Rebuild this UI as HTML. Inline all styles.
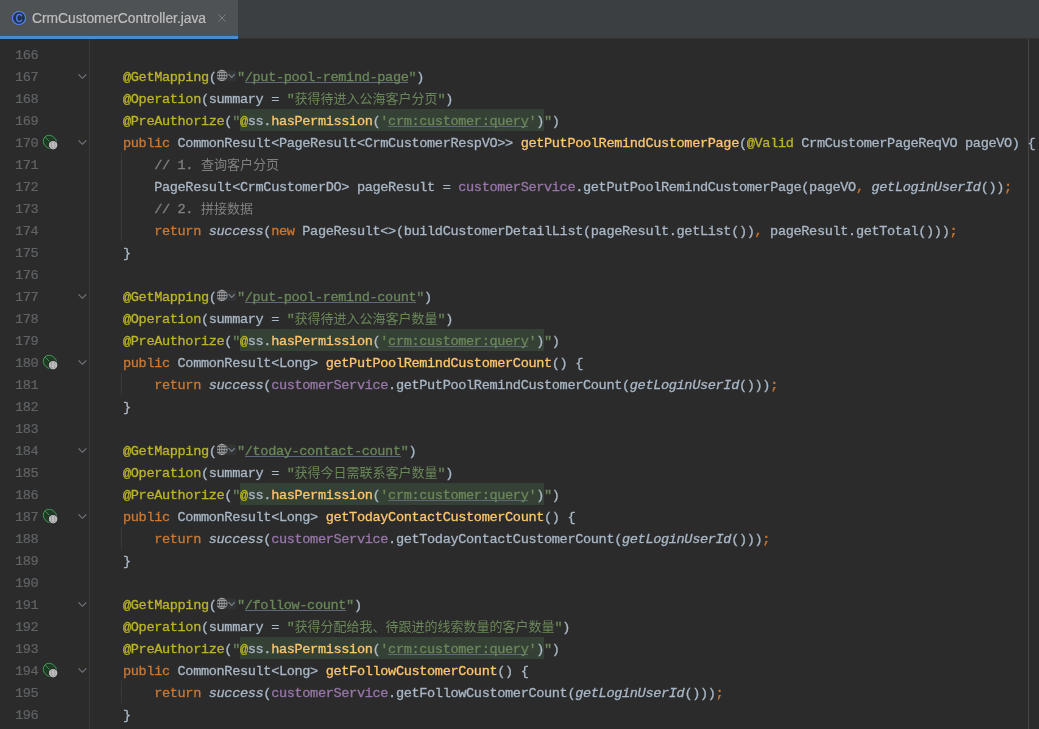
<!DOCTYPE html>
<html lang="zh"><head><meta charset="utf-8"><title>CrmCustomerController.java</title>
<style>
html,body{margin:0;padding:0;background:#2b2b2b;}
#ide{position:absolute;left:0;top:0;width:1039px;height:729px;will-change:transform;}
body{width:1039px;height:729px;overflow:hidden;position:relative;font-family:"Liberation Mono","Noto Sans CJK SC",monospace;font-size:13px;color:#a9b7c6;}
.tabbar{position:absolute;left:0;top:0;width:1039px;height:38px;background:#3c3f41;border-bottom:1px solid #323232;}
.tab{position:absolute;left:0;top:0;width:238px;height:36px;background:#4e5254;border-bottom:3px solid #4a8ad0;}
.cicon{position:absolute;left:11px;top:10px;overflow:visible;}
.tabname{position:absolute;left:32px;top:0;line-height:38.6px;font-family:"Liberation Sans",sans-serif;font-size:13.8px;letter-spacing:0;color:#bfbfbf;-webkit-text-stroke:0.2px;white-space:pre;}
.close{position:absolute;left:218px;top:14px;}
.gline{position:absolute;left:89px;top:39px;width:1px;height:690px;background:#373839;}
.margin{position:absolute;left:1028px;top:39px;width:1px;height:690px;background:#44464a;}
.guide{position:absolute;left:121px;width:1px;background:#393939;}
.ln{position:absolute;left:15px;height:22px;line-height:26px;font-size:13.6px;letter-spacing:-0.361px;-webkit-text-stroke:0.2px;color:#606366;white-space:pre;}
.cl{position:absolute;left:123px;height:22px;line-height:22px;white-space:pre;font-size:13.6px;letter-spacing:-0.361px;-webkit-text-stroke:0.3px;}
.cl span{display:inline-block;height:22px;line-height:22px;vertical-align:top;position:relative;top:2px;}
.cl span.inj,.cl span.inlay{top:0;}
.cl span.z{top:-2px;}
.fold{position:absolute;left:78px;}
.gi{position:absolute;left:42px;}
.z{font-family:"Noto Sans CJK SC",sans-serif;font-size:13px;letter-spacing:0;-webkit-text-stroke:0;}
.an{color:#bbb529;}
.k{color:#cc7832;}
.s{color:#6a8759;}
.su{color:#6a8759;background:linear-gradient(#5e687a,#5e687a) 0 15px/100% 1px no-repeat;}
.m{color:#ffc66d;}
.f{color:#9876aa;}
.c{color:#808080;}
.i{font-style:italic;}
.inj{background:#364135;}
.inlay{width:20.4px;overflow:visible;}
.inlay svg{display:block;}
</style></head>
<body>
<div id="ide">
<div class="tabbar"><div class="tab"><svg class="cicon" width="16" height="16" viewBox="0 0 16 16"><circle cx="8" cy="8" r="6.55" fill="#25324d" stroke="#548af7" stroke-width="1.1"/><text transform="translate(8.05 12) scale(0.84 1)" text-anchor="middle" font-family="Liberation Sans, sans-serif" font-size="11" fill="#548af7" stroke="#548af7" stroke-width="0.3">C</text></svg><span class="tabname">CrmCustomerController.java</span><svg class="close" width="8" height="8" viewBox="0 0 8 8"><path d="M0.5 0.5L7.5 7.5M7.5 0.5L0.5 7.5" stroke="#787e83" stroke-width="1" fill="none"/></svg></div></div>
<div class="gline"></div><div class="margin"></div>
<div class="guide" style="top:153px;height:88px"></div>
<div class="guide" style="top:373px;height:22px"></div>
<div class="guide" style="top:527px;height:22px"></div>
<div class="guide" style="top:681px;height:22px"></div>
<div class="ln" style="top:43px">166</div>
<div class="ln" style="top:65px">167</div>
<svg class="fold" style="top:74px" width="10" height="6" viewBox="0 0 10 6"><path d="M0.5 0.4L4.4 4.3L8.3 0.4" fill="none" stroke="#747a80" stroke-width="1.1"/></svg>
<div class="cl" style="top:65px"><span class="an">@GetMapping</span><span class="d">(</span><span class="inlay"><svg width="21" height="22" viewBox="0 0 21 22"><rect x="-0.5" y="5.2" width="19.8" height="10.8" rx="2.5" fill="#323334"/><g fill="none" stroke="#b0b2b4" stroke-width="0.75"><circle cx="4.9" cy="10.45" r="5.2"/><ellipse cx="4.9" cy="10.45" rx="2.4" ry="5.2"/><path d="M-0.3 10.45H10.1M4.9 5.25V15.65M0.7 7.6H9.1M0.7 13.3H9.1"/></g><path d="M11.6 9.2l3.1 3.1l3.1-3.1" fill="none" stroke="#75818c" stroke-width="1.2"/></svg></span><span class="s">"</span><span class="su">/put-pool-remind-page</span><span class="s">"</span><span class="d">)</span></div>
<div class="ln" style="top:87px">168</div>
<div class="cl" style="top:87px"><span class="an">@Operation</span><span class="d">(summary = </span><span class="s">"<span class="z">获得待进入公海客户分页</span>"</span><span class="d">)</span></div>
<div class="ln" style="top:109px">169</div>
<div class="cl" style="top:109px"><span class="an">@PreAuthorize</span><span class="d">(</span><span class="s">"</span><span class="inj"><span class="an">@</span><span class="d">ss.</span><span class="m">hasPermission</span><span class="d">(</span><span class="s">'</span><span class="su">crm:customer:query</span><span class="s">'</span><span class="d">)</span></span><span class="s">"</span><span class="d">)</span></div>
<div class="ln" style="top:131px">170</div>
<svg class="fold" style="top:140px" width="10" height="6" viewBox="0 0 10 6"><path d="M0.5 0.4L4.4 4.3L8.3 0.4" fill="none" stroke="#747a80" stroke-width="1.1"/></svg>
<svg class="gi" style="top:133px" width="18" height="18" viewBox="0 0 18 18"><ellipse cx="8" cy="9" rx="7.2" ry="6.2" transform="rotate(45 8 9)" fill="#1f3a25" stroke="#45a05a" stroke-width="0.85"/><path d="M3.2 4.2L7.8 8.8" stroke="#45a05a" stroke-width="0.85" fill="none"/><circle cx="11.1" cy="12.1" r="5.1" fill="#2b2b2b"/><circle cx="11.1" cy="12.1" r="4.2" fill="#d6d6d6"/><g fill="none" stroke="#8e8e8e" stroke-width="0.7"><ellipse cx="11.1" cy="12.1" rx="1.8" ry="4"/><path d="M7 12.1H15.2M7.8 10H14.4M7.8 14.2H14.4"/></g></svg>
<div class="cl" style="top:131px"><span class="k">public</span><span class="d"> CommonResult&lt;PageResult&lt;CrmCustomerRespVO&gt;&gt; </span><span class="m">getPutPoolRemindCustomerPage</span><span class="d">(</span><span class="an">@Valid</span><span class="d"> CrmCustomerPageReqVO pageVO) {</span></div>
<div class="ln" style="top:153px">171</div>
<div class="cl" style="top:153px"><span class="d">    </span><span class="c">// 1. <span class="z">查询客户分页</span></span></div>
<div class="ln" style="top:175px">172</div>
<div class="cl" style="top:175px"><span class="d">    PageResult&lt;CrmCustomerDO&gt; pageResult = </span><span class="f">customerService</span><span class="d">.getPutPoolRemindCustomerPage(pageVO</span><span class="k">,</span><span class="d"> </span><span class="i">getLoginUserId</span><span class="d">())</span><span class="k">;</span></div>
<div class="ln" style="top:197px">173</div>
<div class="cl" style="top:197px"><span class="d">    </span><span class="c">// 2. <span class="z">拼接数据</span></span></div>
<div class="ln" style="top:219px">174</div>
<div class="cl" style="top:219px"><span class="d">    </span><span class="k">return</span><span class="d"> </span><span class="i">success</span><span class="d">(</span><span class="k">new</span><span class="d"> PageResult&lt;&gt;(buildCustomerDetailList(pageResult.getList())</span><span class="k">,</span><span class="d"> pageResult.getTotal()))</span><span class="k">;</span></div>
<div class="ln" style="top:241px">175</div>
<div class="cl" style="top:241px"><span class="d">}</span></div>
<div class="ln" style="top:263px">176</div>
<div class="ln" style="top:285px">177</div>
<svg class="fold" style="top:294px" width="10" height="6" viewBox="0 0 10 6"><path d="M0.5 0.4L4.4 4.3L8.3 0.4" fill="none" stroke="#747a80" stroke-width="1.1"/></svg>
<div class="cl" style="top:285px"><span class="an">@GetMapping</span><span class="d">(</span><span class="inlay"><svg width="21" height="22" viewBox="0 0 21 22"><rect x="-0.5" y="5.2" width="19.8" height="10.8" rx="2.5" fill="#323334"/><g fill="none" stroke="#b0b2b4" stroke-width="0.75"><circle cx="4.9" cy="10.45" r="5.2"/><ellipse cx="4.9" cy="10.45" rx="2.4" ry="5.2"/><path d="M-0.3 10.45H10.1M4.9 5.25V15.65M0.7 7.6H9.1M0.7 13.3H9.1"/></g><path d="M11.6 9.2l3.1 3.1l3.1-3.1" fill="none" stroke="#75818c" stroke-width="1.2"/></svg></span><span class="s">"</span><span class="su">/put-pool-remind-count</span><span class="s">"</span><span class="d">)</span></div>
<div class="ln" style="top:307px">178</div>
<div class="cl" style="top:307px"><span class="an">@Operation</span><span class="d">(summary = </span><span class="s">"<span class="z">获得待进入公海客户数量</span>"</span><span class="d">)</span></div>
<div class="ln" style="top:329px">179</div>
<div class="cl" style="top:329px"><span class="an">@PreAuthorize</span><span class="d">(</span><span class="s">"</span><span class="inj"><span class="an">@</span><span class="d">ss.</span><span class="m">hasPermission</span><span class="d">(</span><span class="s">'</span><span class="su">crm:customer:query</span><span class="s">'</span><span class="d">)</span></span><span class="s">"</span><span class="d">)</span></div>
<div class="ln" style="top:351px">180</div>
<svg class="fold" style="top:360px" width="10" height="6" viewBox="0 0 10 6"><path d="M0.5 0.4L4.4 4.3L8.3 0.4" fill="none" stroke="#747a80" stroke-width="1.1"/></svg>
<svg class="gi" style="top:353px" width="18" height="18" viewBox="0 0 18 18"><ellipse cx="8" cy="9" rx="7.2" ry="6.2" transform="rotate(45 8 9)" fill="#1f3a25" stroke="#45a05a" stroke-width="0.85"/><path d="M3.2 4.2L7.8 8.8" stroke="#45a05a" stroke-width="0.85" fill="none"/><circle cx="11.1" cy="12.1" r="5.1" fill="#2b2b2b"/><circle cx="11.1" cy="12.1" r="4.2" fill="#d6d6d6"/><g fill="none" stroke="#8e8e8e" stroke-width="0.7"><ellipse cx="11.1" cy="12.1" rx="1.8" ry="4"/><path d="M7 12.1H15.2M7.8 10H14.4M7.8 14.2H14.4"/></g></svg>
<div class="cl" style="top:351px"><span class="k">public</span><span class="d"> CommonResult&lt;Long&gt; </span><span class="m">getPutPoolRemindCustomerCount</span><span class="d">() {</span></div>
<div class="ln" style="top:373px">181</div>
<div class="cl" style="top:373px"><span class="d">    </span><span class="k">return</span><span class="d"> </span><span class="i">success</span><span class="d">(</span><span class="f">customerService</span><span class="d">.getPutPoolRemindCustomerCount(</span><span class="i">getLoginUserId</span><span class="d">()))</span><span class="k">;</span></div>
<div class="ln" style="top:395px">182</div>
<div class="cl" style="top:395px"><span class="d">}</span></div>
<div class="ln" style="top:417px">183</div>
<div class="ln" style="top:439px">184</div>
<svg class="fold" style="top:448px" width="10" height="6" viewBox="0 0 10 6"><path d="M0.5 0.4L4.4 4.3L8.3 0.4" fill="none" stroke="#747a80" stroke-width="1.1"/></svg>
<div class="cl" style="top:439px"><span class="an">@GetMapping</span><span class="d">(</span><span class="inlay"><svg width="21" height="22" viewBox="0 0 21 22"><rect x="-0.5" y="5.2" width="19.8" height="10.8" rx="2.5" fill="#323334"/><g fill="none" stroke="#b0b2b4" stroke-width="0.75"><circle cx="4.9" cy="10.45" r="5.2"/><ellipse cx="4.9" cy="10.45" rx="2.4" ry="5.2"/><path d="M-0.3 10.45H10.1M4.9 5.25V15.65M0.7 7.6H9.1M0.7 13.3H9.1"/></g><path d="M11.6 9.2l3.1 3.1l3.1-3.1" fill="none" stroke="#75818c" stroke-width="1.2"/></svg></span><span class="s">"</span><span class="su">/today-contact-count</span><span class="s">"</span><span class="d">)</span></div>
<div class="ln" style="top:461px">185</div>
<div class="cl" style="top:461px"><span class="an">@Operation</span><span class="d">(summary = </span><span class="s">"<span class="z">获得今日需联系客户数量</span>"</span><span class="d">)</span></div>
<div class="ln" style="top:483px">186</div>
<div class="cl" style="top:483px"><span class="an">@PreAuthorize</span><span class="d">(</span><span class="s">"</span><span class="inj"><span class="an">@</span><span class="d">ss.</span><span class="m">hasPermission</span><span class="d">(</span><span class="s">'</span><span class="su">crm:customer:query</span><span class="s">'</span><span class="d">)</span></span><span class="s">"</span><span class="d">)</span></div>
<div class="ln" style="top:505px">187</div>
<svg class="fold" style="top:514px" width="10" height="6" viewBox="0 0 10 6"><path d="M0.5 0.4L4.4 4.3L8.3 0.4" fill="none" stroke="#747a80" stroke-width="1.1"/></svg>
<svg class="gi" style="top:507px" width="18" height="18" viewBox="0 0 18 18"><ellipse cx="8" cy="9" rx="7.2" ry="6.2" transform="rotate(45 8 9)" fill="#1f3a25" stroke="#45a05a" stroke-width="0.85"/><path d="M3.2 4.2L7.8 8.8" stroke="#45a05a" stroke-width="0.85" fill="none"/><circle cx="11.1" cy="12.1" r="5.1" fill="#2b2b2b"/><circle cx="11.1" cy="12.1" r="4.2" fill="#d6d6d6"/><g fill="none" stroke="#8e8e8e" stroke-width="0.7"><ellipse cx="11.1" cy="12.1" rx="1.8" ry="4"/><path d="M7 12.1H15.2M7.8 10H14.4M7.8 14.2H14.4"/></g></svg>
<div class="cl" style="top:505px"><span class="k">public</span><span class="d"> CommonResult&lt;Long&gt; </span><span class="m">getTodayContactCustomerCount</span><span class="d">() {</span></div>
<div class="ln" style="top:527px">188</div>
<div class="cl" style="top:527px"><span class="d">    </span><span class="k">return</span><span class="d"> </span><span class="i">success</span><span class="d">(</span><span class="f">customerService</span><span class="d">.getTodayContactCustomerCount(</span><span class="i">getLoginUserId</span><span class="d">()))</span><span class="k">;</span></div>
<div class="ln" style="top:549px">189</div>
<div class="cl" style="top:549px"><span class="d">}</span></div>
<div class="ln" style="top:571px">190</div>
<div class="ln" style="top:593px">191</div>
<svg class="fold" style="top:602px" width="10" height="6" viewBox="0 0 10 6"><path d="M0.5 0.4L4.4 4.3L8.3 0.4" fill="none" stroke="#747a80" stroke-width="1.1"/></svg>
<div class="cl" style="top:593px"><span class="an">@GetMapping</span><span class="d">(</span><span class="inlay"><svg width="21" height="22" viewBox="0 0 21 22"><rect x="-0.5" y="5.2" width="19.8" height="10.8" rx="2.5" fill="#323334"/><g fill="none" stroke="#b0b2b4" stroke-width="0.75"><circle cx="4.9" cy="10.45" r="5.2"/><ellipse cx="4.9" cy="10.45" rx="2.4" ry="5.2"/><path d="M-0.3 10.45H10.1M4.9 5.25V15.65M0.7 7.6H9.1M0.7 13.3H9.1"/></g><path d="M11.6 9.2l3.1 3.1l3.1-3.1" fill="none" stroke="#75818c" stroke-width="1.2"/></svg></span><span class="s">"</span><span class="su">/follow-count</span><span class="s">"</span><span class="d">)</span></div>
<div class="ln" style="top:615px">192</div>
<div class="cl" style="top:615px"><span class="an">@Operation</span><span class="d">(summary = </span><span class="s">"<span class="z">获得分配给我、待跟进的线索数量的客户数量</span>"</span><span class="d">)</span></div>
<div class="ln" style="top:637px">193</div>
<div class="cl" style="top:637px"><span class="an">@PreAuthorize</span><span class="d">(</span><span class="s">"</span><span class="inj"><span class="an">@</span><span class="d">ss.</span><span class="m">hasPermission</span><span class="d">(</span><span class="s">'</span><span class="su">crm:customer:query</span><span class="s">'</span><span class="d">)</span></span><span class="s">"</span><span class="d">)</span></div>
<div class="ln" style="top:659px">194</div>
<svg class="fold" style="top:668px" width="10" height="6" viewBox="0 0 10 6"><path d="M0.5 0.4L4.4 4.3L8.3 0.4" fill="none" stroke="#747a80" stroke-width="1.1"/></svg>
<svg class="gi" style="top:661px" width="18" height="18" viewBox="0 0 18 18"><ellipse cx="8" cy="9" rx="7.2" ry="6.2" transform="rotate(45 8 9)" fill="#1f3a25" stroke="#45a05a" stroke-width="0.85"/><path d="M3.2 4.2L7.8 8.8" stroke="#45a05a" stroke-width="0.85" fill="none"/><circle cx="11.1" cy="12.1" r="5.1" fill="#2b2b2b"/><circle cx="11.1" cy="12.1" r="4.2" fill="#d6d6d6"/><g fill="none" stroke="#8e8e8e" stroke-width="0.7"><ellipse cx="11.1" cy="12.1" rx="1.8" ry="4"/><path d="M7 12.1H15.2M7.8 10H14.4M7.8 14.2H14.4"/></g></svg>
<div class="cl" style="top:659px"><span class="k">public</span><span class="d"> CommonResult&lt;Long&gt; </span><span class="m">getFollowCustomerCount</span><span class="d">() {</span></div>
<div class="ln" style="top:681px">195</div>
<div class="cl" style="top:681px"><span class="d">    </span><span class="k">return</span><span class="d"> </span><span class="i">success</span><span class="d">(</span><span class="f">customerService</span><span class="d">.getFollowCustomerCount(</span><span class="i">getLoginUserId</span><span class="d">()))</span><span class="k">;</span></div>
<div class="ln" style="top:703px">196</div>
<div class="cl" style="top:703px"><span class="d">}</span></div>
</div>
</body></html>
